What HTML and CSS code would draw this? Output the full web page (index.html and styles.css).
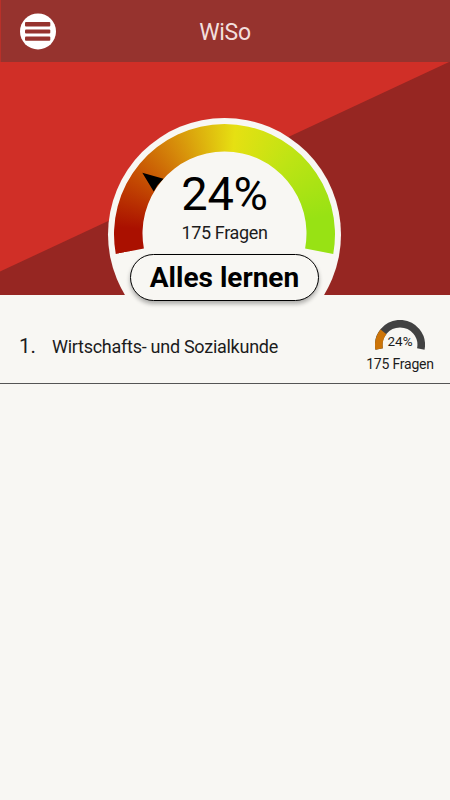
FILE: index.html
```html
<!DOCTYPE html>
<html lang="de">
<head>
<meta charset="utf-8">
<title>WiSo</title>
<link rel="stylesheet" href="styles.css">
</head>
<body>
<header class="topbar">
  <button class="menu" aria-label="Menü">
    <svg width="36" height="37" viewBox="0 0 36 37"><circle cx="18" cy="18.4" r="18" fill="#fff"/><g fill="#96332e"><rect x="5" y="9" width="25.3" height="4.4" rx="1"/><rect x="5" y="16.4" width="25.3" height="4.2" rx="1"/><rect x="5" y="23.4" width="25.3" height="4.4" rx="1"/></g></svg>
  </button>
  <h1 class="title">WiSo</h1>
</header>
<section class="hero">
  <svg class="backdrop" viewBox="0 0 450 233" width="450" height="233"><path fill="#d02f27" d="M0 0H450V233H0z"/><path fill="#962622" d="M0 209.5L449 0H450V233H0z"/></svg>
  <div class="disc">
    <div class="arc"></div>
    <svg class="needle" width="233" height="233" viewBox="0 0 233 233"><path d="M34.3 54.8L55.5 60.7Q49.5 66 45.7 73.4z"/></svg>
    <div class="percent">24%</div>
    <div class="count">175 Fragen</div>
  </div>
</section>
<div class="action"><button class="learn">Alles lernen</button></div>
<main class="list">
  <article class="row">
    <span class="number">1.</span>
    <span class="name">Wirtschafts- und Sozialkunde</span>
    <div class="stats">
      <div class="mini">
        <svg width="50" height="30" viewBox="0 0 50 30"><g fill="none" stroke-width="7.6"><path stroke="#424242" d="M4.2 29A21.2 21.2 0 1 1 45.8 29"/><path stroke="#cc7408" d="M4.2 29A21.2 21.2 0 0 1 8.5 11.8"/></g></svg>
        <span class="mini-percent">24%</span>
      </div>
      <div class="mini-count">175 Fragen</div>
    </div>
  </article>
</main>
</body>
</html>
```
FILE: styles.css
```css
* { box-sizing: border-box; }
body {
  margin: 0;
  height: 800px;
  overflow: hidden;
  background: #f8f7f3;
  color: #1c1c1c;
  font-family: Roboto, sans-serif;
}
button { font-family: inherit; padding: 0; }
.topbar {
  display: grid;
  grid-template-columns: 56px 1fr 56px;
  align-items: center;
  height: 62px;
  background: #96332e;
  border-left: 1px solid #b93029;
}
.menu {
  width: 36px;
  height: 36px;
  margin-left: 19px;
  border: 0;
  background: none;
}
.menu svg { display: block; }
.title {
  margin: 3px 1px 0 0;
  text-align: center;
  font-size: 23px;
  font-weight: 400;
  line-height: 26px;
  letter-spacing: -0.3px;
  color: #f2dfdd;
}
.hero {
  position: relative;
  height: 233px;
  overflow: hidden;
  display: flex;
  justify-content: center;
  align-items: flex-start;
  padding: 56px 1px 0 0;
}
.backdrop { position: absolute; inset: 0; }
.disc {
  position: relative;
  flex: none;
  width: 233px;
  height: 233px;
  border-radius: 50%;
  background: #f8f7f3;
  text-align: center;
  padding-top: 48px;
}
.arc {
  position: absolute;
  inset: 0;
  background: conic-gradient(from 259.8deg, #aa1000 0deg, #aa1000 14deg, #c44a02 42deg, #d68a0a 70deg, #e6e012 106deg, #bfe414 140deg, #98e214 180deg, #98e214 200.4deg, transparent 201deg);
  clip-path: path("M7.75 136.1A110.5 110.5 0 1 1 225.25 136.1L197.1 130.6A82 82 0 1 0 35.9 130.6Z");
}
.needle { position: absolute; inset: 0; }
.percent {
  position: relative;
  font-size: 47px;
  line-height: 56px;
  letter-spacing: -0.3px;
  color: #000;
}
.count {
  position: relative;
  font-size: 18px;
  line-height: 22px;
  letter-spacing: -0.35px;
}
.action {
  display: flex;
  justify-content: center;
  height: 5px;
  margin-top: -41px;
  padding-right: 1px;
  position: relative;
}
.learn {
  flex: none;
  width: 189px;
  height: 46.5px;
  border: 1.5px solid #000;
  border-radius: 24px;
  background: #f8f7f3;
  box-shadow: 0 3px 4px rgba(0, 0, 0, .3);
  font-size: 28px;
  font-weight: 700;
  color: #000;
}
.list { padding-top: 37px; }
.row {
  display: grid;
  grid-template-columns: 32px 1fr 70px;
  align-items: center;
  height: 88px;
  padding: 13px 15px 0 20px;
  border-bottom: 1px solid #555;
}
.number { font-size: 20.5px; margin-left: -1px; }
.name { font-size: 18px; letter-spacing: -0.27px; white-space: nowrap; }
.stats {
  display: flex;
  flex-direction: column;
  align-items: center;
  margin-top: -1px;
}
.mini { position: relative; width: 50px; height: 30px; }
.mini svg { display: block; }
.mini-percent {
  position: absolute;
  left: 0;
  right: 0;
  top: 13px;
  text-align: center;
  font-size: 13.5px;
  line-height: 16px;
}
.mini-count {
  margin-top: 6px;
  font-size: 14px;
  letter-spacing: -0.2px;
  line-height: 16px;
  white-space: nowrap;
}
```
